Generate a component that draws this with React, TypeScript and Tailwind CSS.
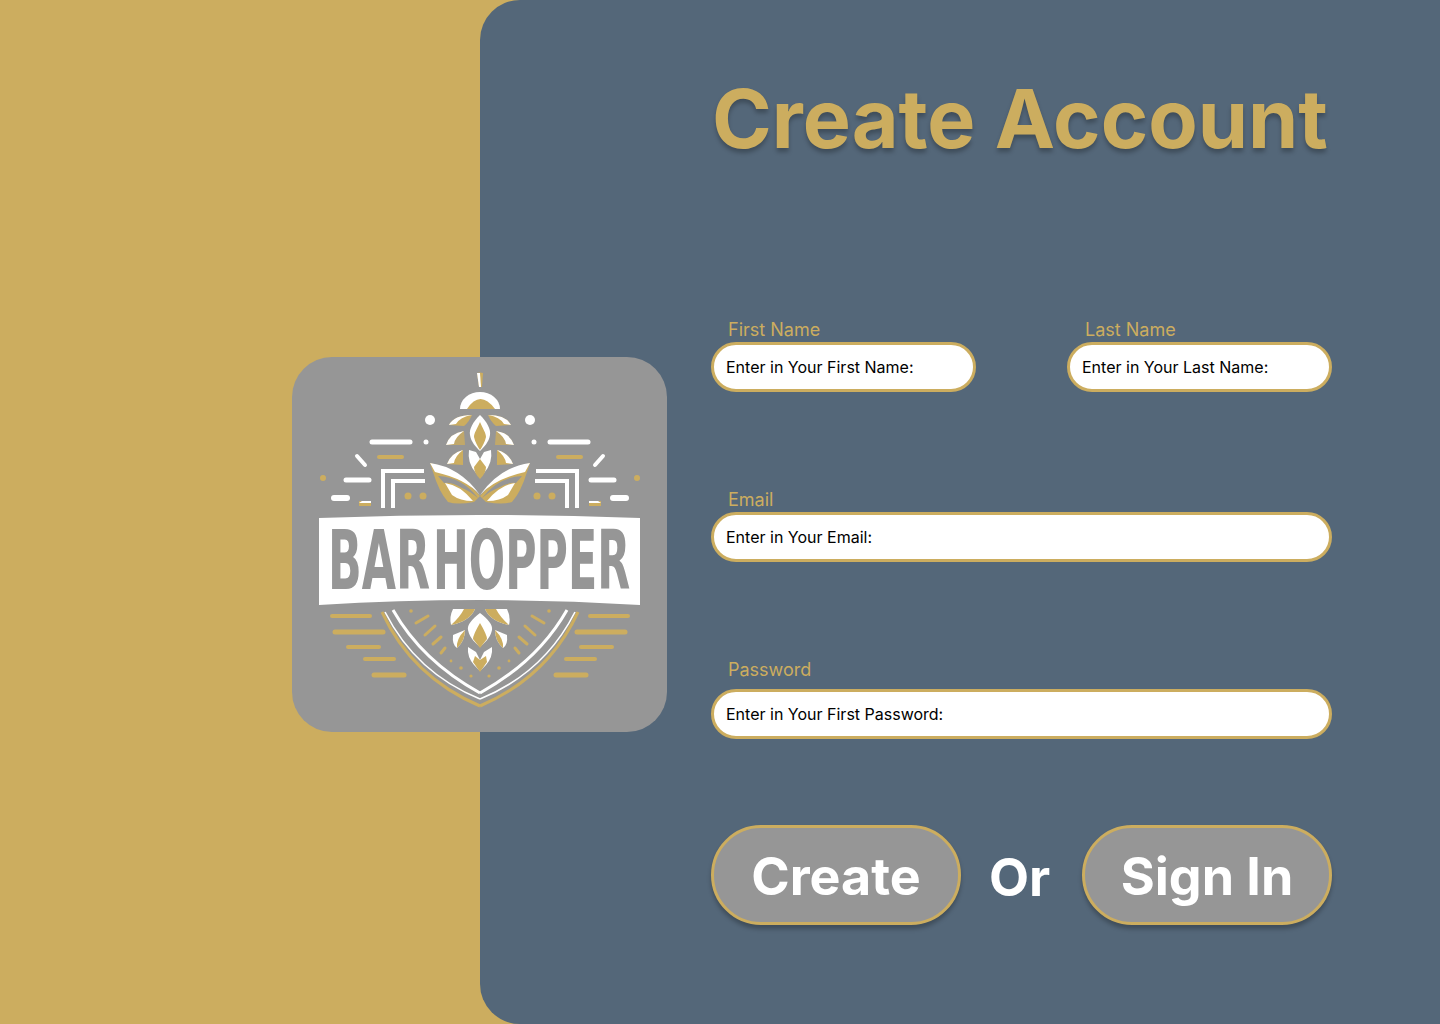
const GOLD = '#ccad5f';
const GRAY = '#969696';

function HopHalf() {
  // left half of the mark, mirrored for the right
  return (
    <g>
      <circle cx="138" cy="63" r="5" fill="#fff" />
      <circle cx="134" cy="85" r="2.5" fill="#fff" />
      <path d="M80 85H118" stroke="#fff" strokeWidth="5" strokeLinecap="round" />
      <path d="M87 100H110" stroke={GOLD} strokeWidth="4" strokeLinecap="round" />
      <path d="M65 99L73 108" stroke="#fff" strokeWidth="4" strokeLinecap="round" />
      <circle cx="31" cy="121" r="3" fill={GOLD} />
      <path d="M54 123H77" stroke="#fff" strokeWidth="5" strokeLinecap="round" />
      <path d="M42 141H55" stroke="#fff" strokeWidth="6" strokeLinecap="round" />
      <path d="M67 149V144H79V149Z" fill={GOLD} />
      <path d="M70 144H79V146H67Z" fill="#fff" />
      <path d="M91 151V114H132" stroke="#fff" strokeWidth="4" fill="none" />
      <path d="M101 151V124H133" stroke="#fff" strokeWidth="4" fill="none" />
      <circle cx="116" cy="139" r="3.5" fill={GOLD} />
      <circle cx="131" cy="139" r="3.5" fill={GOLD} />

      <path d="M157 68Q162 58 180 58Q177 65 172 69Z" fill={GOLD} />
      <path d="M157 68Q162 58 180 58Q168 60 164 67Z" fill="#fff" />
      <path d="M154 88Q158 76 172 74L173 88Z" fill={GOLD} opacity="0.8" />
      <path d="M154 88Q158 76 172 74Q163 80 162 87Z" fill="#fff" />
      <path d="M155 107Q159 96 171 93L171 108Z" fill={GOLD} />
      <path d="M155 107Q159 96 171 93Q163 99 162 106Z" fill="#fff" />

      <path d="M138 106Q165 112 188 139L182 145Q165 148 156 145Q147 135 141 115Z" fill={GOLD} />
      <path d="M138 106Q168 110 188 138Q174 122 143 115Z" fill="#fff" />
      <path d="M146 119Q170 120 186 141Q176 133 170 131Q160 125 152 126Z" fill={GRAY} />
      <path d="M153 126Q168 128 181 144Q168 144 160 138Z" fill="#fff" />

      <path d="M40 259H78" stroke={GOLD} strokeWidth="4" strokeLinecap="round" />
      <path d="M43 275H91" stroke={GOLD} strokeWidth="5" strokeLinecap="round" />
      <path d="M56 290H87" stroke={GOLD} strokeWidth="4" strokeLinecap="round" />
      <path d="M73 302H102" stroke={GOLD} strokeWidth="4" strokeLinecap="round" />
      <path d="M82 318H112" stroke={GOLD} strokeWidth="5" strokeLinecap="round" />

      <path d="M90 255Q120 320 188 349" stroke={GOLD} strokeWidth="3" fill="none" />
      <path d="M93 255Q124 316 188 342" stroke="#fff" strokeWidth="1.6" fill="none" />
      <path d="M101 253Q130 304 188 336" stroke="#fff" strokeWidth="3" fill="none" />
      <path d="M124 266L136 259" stroke={GOLD} strokeWidth="3" strokeLinecap="round" />
      <path d="M133 278L143 269" stroke={GOLD} strokeWidth="3" strokeLinecap="round" />
      <path d="M141 287L149 280" stroke={GOLD} strokeWidth="3" strokeLinecap="round" />
      <path d="M149 296L153 291" stroke={GOLD} strokeWidth="3" strokeLinecap="round" />
      <circle cx="119" cy="254" r="1.8" fill={GOLD} />
      <circle cx="159" cy="304" r="1.4" fill={GOLD} />
      <circle cx="169" cy="311" r="1.8" fill={GOLD} />
      <circle cx="179" cy="319" r="1.6" fill={GOLD} />

      <path d="M161 252H183Q178 264 159 268Q157 260 161 252Z" fill="#fff" />
      <path d="M183 252Q178 264 159 268Q168 260 172 252Z" fill={GOLD} />
      <path d="M161 278L173 273Q173 284 165 291Q160 288 161 278Z" fill="#fff" />
      <path d="M173 273Q173 284 165 291Q164 282 173 273Z" fill={GOLD} />
    </g>
  );
}

function Logo() {
  return (
    <svg viewBox="0 0 375 375" className="h-full w-full">
      <path d="M185 16Q188 15 191 16L190 30H187Z" fill={GOLD} />
      <path d="M185 16H188L189 30H187Z" fill="#fff" />
      <path d="M168 52A20 17 0 0 1 208 52Z" fill="#fff" />
      <path d="M175 52Q188 32 203 52Z" fill={GOLD} />
      <HopHalf />
      <g transform="translate(376 0) scale(-1 1)">
        <HopHalf />
      </g>

      <path d="M188 58C195 65 199 72 198 78C197 85 192 90 188 94C184 90 179 85 178 78C177 72 181 65 188 58Z" fill="#fff" />
      <path d="M188 65C191 72 194 76 194 80C193 85 190 90 188 93C186 90 183 85 182 80C182 76 185 72 188 65Z" fill={GOLD} />
      <path d="M177 93L184 95L188 102L192 95L199 93Q201 106 192 116L188 121L184 116Q175 106 177 93Z" fill="#fff" />
      <path d="M188 102L194 110Q194 116 188 122Q182 116 182 110Z" fill={GOLD} />

      <path d="M27 161Q187 155 348 161V248Q187 238 27 248Z" fill="#fff" />
      <g fontFamily="'DejaVu Sans', sans-serif" fontWeight="700" fontSize="82" fill={GRAY}>
        <text transform="translate(36 232) scale(0.54 1)">BAR</text>
        <text transform="translate(141 232) scale(0.522 1)">HOPPER</text>
      </g>

      <path d="M188 256C196 262 201 268 200 273C198 282 192 286 188 290C184 286 178 282 176 273C175 268 180 262 188 256Z" fill="#fff" />
      <path d="M188 266Q195 278 195 282L188 291L181 282Q181 278 188 266Z" fill={GOLD} />
      <path d="M176 290L184 295L188 303L192 295L200 290Q201 300 194 308L188 314L182 308Q175 300 176 290Z" fill="#fff" />
      <path d="M183 299L188 303L194 299L195 305L188 315L181 305Z" fill={GOLD} />
    </svg>
  );
}

function Field({
  label,
  placeholder,
  className,
  labelClass,
}: {
  label: string;
  placeholder: string;
  className?: string;
  labelClass?: string;
}) {
  return (
    <label className={`flex flex-col ${className ?? ''}`}>
      <span className={`pt-[1px] text-[18px] leading-[22px] text-[#ccad5f] ${labelClass ?? 'pb-[1px] pl-[17px]'}`}>
        {label}
      </span>
      <input
        placeholder={placeholder}
        className="h-[50px] rounded-full border-[3px] border-[#ccad5f] bg-white pl-[12px] text-[16px] text-black outline-none placeholder:text-black"
      />
    </label>
  );
}

function ActionButton({ children }: { children: string }) {
  return (
    <button className="h-[100px] w-[250px] rounded-[50px] border-[3px] border-[#ccad5f] bg-[#969696] pt-[3px] text-[52px] font-bold text-white shadow-[0_4px_4px_rgba(0,0,0,0.25)]">
      {children}
    </button>
  );
}

export default function App() {
  return (
    <div className="relative flex h-[1024px] w-[1440px] overflow-hidden bg-[#ccad5f] font-['Inter',sans-serif]">
      <div className="w-[480px] shrink-0" />
      <main className="flex flex-1 flex-col rounded-l-[40px] bg-[#546779] pl-[231px] pr-[108px]">
        <h1 className="mt-[71px] h-[96px] pr-[3px] text-center text-[80.8px] leading-[96px] font-bold whitespace-nowrap text-[#ccad5f] [text-shadow:0_4px_4px_rgba(0,0,0,0.25)]">
          Create Account
        </h1>
        <div className="mt-[151px] flex justify-between">
          <Field className="w-[265px]" label="First Name" placeholder="Enter in Your First Name:" />
          <Field
            className="w-[265px]"
            labelClass="pb-[1px] pl-[18px]"
            label="Last Name"
            placeholder="Enter in Your Last Name:"
          />
        </div>
        <Field className="mt-[96px]" label="Email" placeholder="Enter in Your Email:" />
        <Field
          className="mt-[96px]"
          labelClass="pb-[8px] pl-[17px]"
          label="Password"
          placeholder="Enter in Your First Password:"
        />
        <div className="mt-[86px] flex items-center justify-between">
          <ActionButton>Create</ActionButton>
          <span className="mr-[4px] pt-[6px] text-[52px] font-bold text-white">Or</span>
          <ActionButton>Sign In</ActionButton>
        </div>
      </main>
      <div className="absolute top-[357px] left-[292px] h-[375px] w-[375px] rounded-[40px] bg-[#969696]">
        <Logo />
      </div>
    </div>
  );
}
